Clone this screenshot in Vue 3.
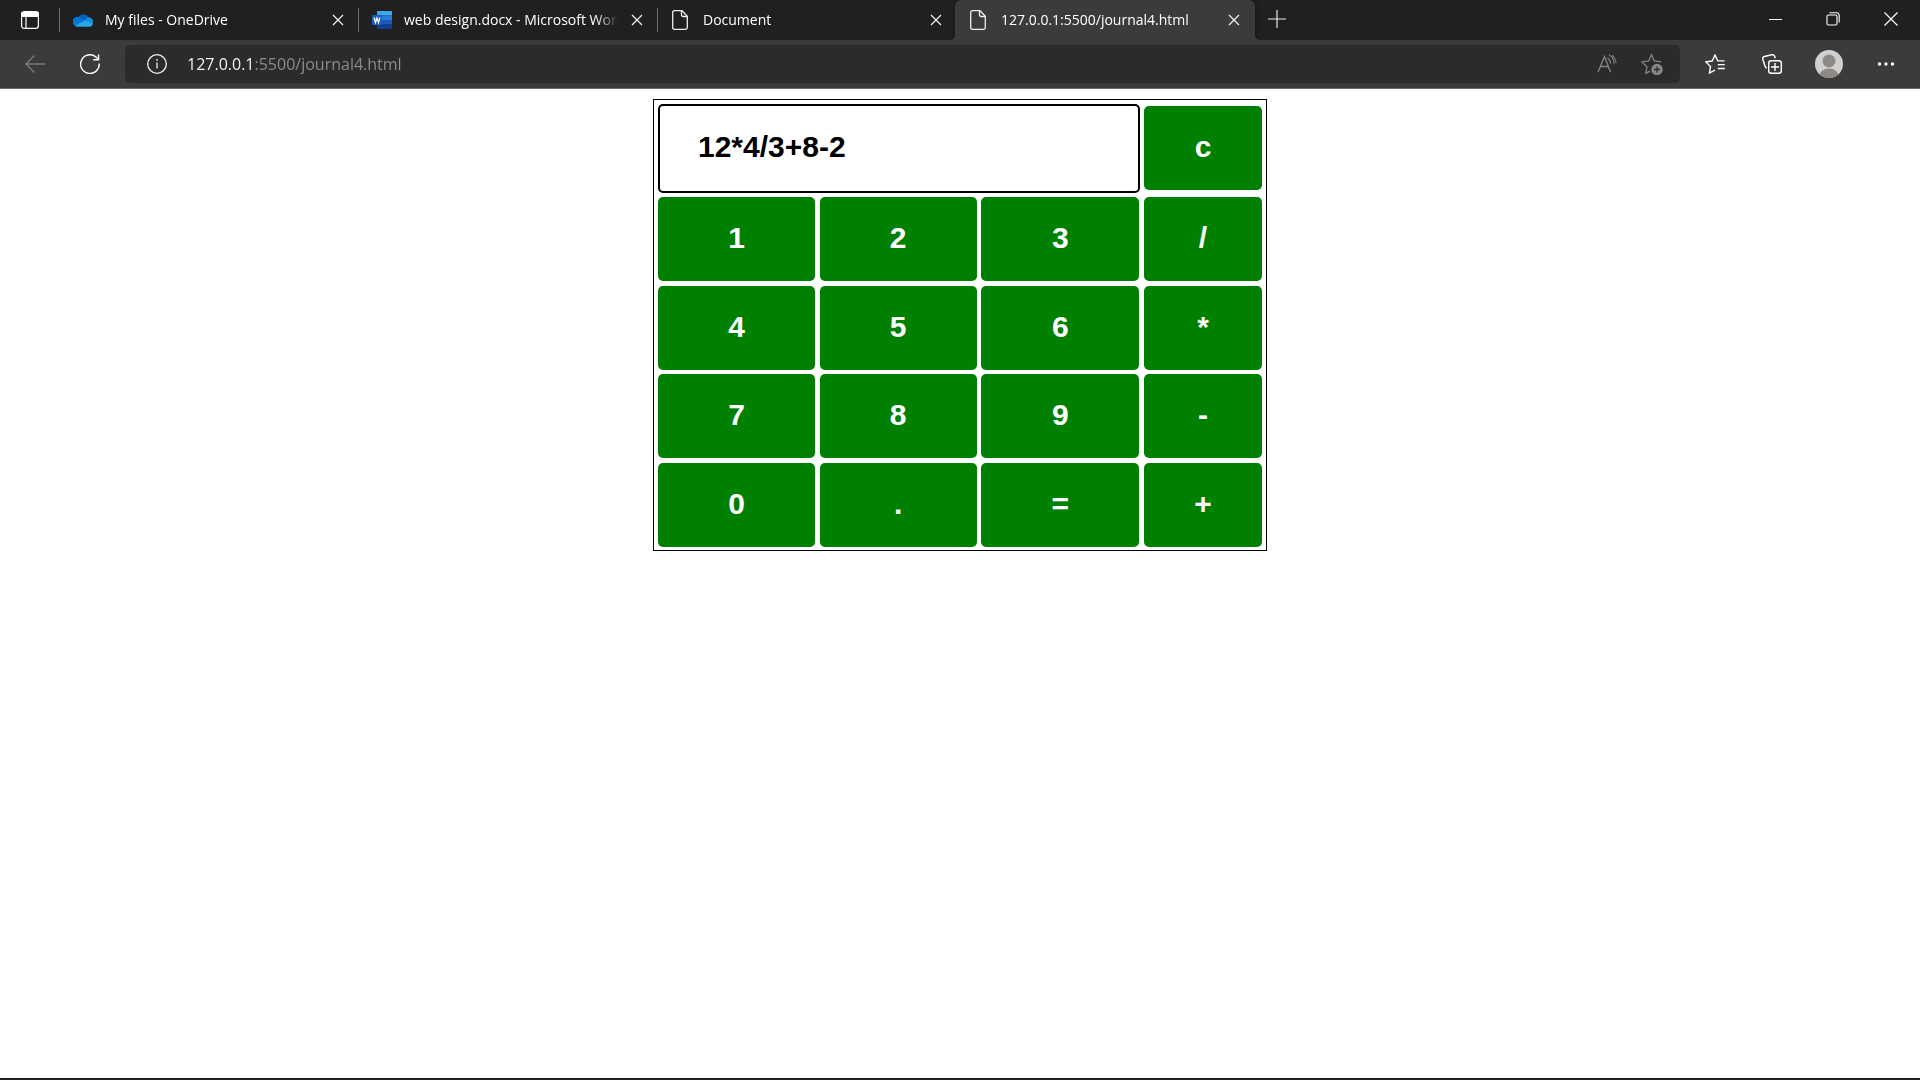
<script setup>
import { ref } from 'vue'

const tabs = [
  { id: 1, title: 'My files - OneDrive', icon: 'onedrive' },
  { id: 2, title: 'web design.docx - Microsoft Word', icon: 'word' },
  { id: 3, title: 'Document', icon: 'file' },
  { id: 4, title: '127.0.0.1:5500/journal4.html', icon: 'file' },
]
const activeTab = ref(4)
const address = ref('127.0.0.1:5500/journal4.html')

const keys = ['1', '2', '3', '/', '4', '5', '6', '*', '7', '8', '9', '-', '0', '.', '=', '+']
const expression = ref('12*4/3+8-2')

function compute(source) {
  const tokens = source.match(/\d*\.?\d+|[-+*/]/g) || []
  const terms = []
  let sign = '+'
  for (const token of tokens) {
    if (/^[-+*/]$/.test(token)) {
      sign = token
      continue
    }
    const value = Number(token)
    if (sign === '*') terms.push(terms.pop() * value)
    else if (sign === '/') terms.push(terms.pop() / value)
    else terms.push(sign === '-' ? -value : value)
  }
  return String(terms.reduce((sum, term) => sum + term, 0))
}

function press(key) {
  expression.value = key === '=' ? compute(expression.value) : expression.value + key
}
</script>

<template>
  <div class="browser">
    <header>
      <div class="titlebar">
        <button class="tab-actions" aria-label="Tab actions">
          <svg width="20" height="20" viewBox="0 0 20 20" fill="none" stroke="#fff" stroke-width="1.2">
            <rect x="1.600" y="1.600" width="16.800" height="16.800" rx="2.600" />
            <path d="M2 2.500h16v3.800H2z" fill="#fff" />
            <path d="M6 6v12.400" />
          </svg>
        </button>
        <nav class="tabs" aria-label="Tabs">
          <div v-for="tab in tabs" :key="tab.id" class="tab" :class="{ active: tab.id === activeTab }">
            <svg v-if="tab.icon === 'onedrive'" class="tab-icon" viewBox="0 0 20 20">
              <path d="M4.800 9A5.900 5.900 0 0 1 15.600 7.200L12 12 5 9.300z" fill="#0364b8" />
              <path d="M1 15A4.500 4.500 0 0 1 7.600 8L13 11.400 3 16.400A4 4 0 0 1 1 15z" fill="#0078d4" />
              <path d="M15.600 7.200a4.600 4.600 0 0 1 4.200 6L12.200 11c.8-2 1.600-3.300 3.400-3.800z" fill="#1490df" />
              <path d="M2.200 15.700 11.800 10.400 19.700 13A3.400 3.400 0 0 1 16.300 16.800H4.600a4 4 0 0 1-2.400-1.100z" fill="#28a8ea" />
            </svg>
            <svg v-else-if="tab.icon === 'word'" class="tab-icon" viewBox="0 0 20 20">
              <path d="M6 1h13a1 1 0 0 1 1 1v3.500H5V2a1 1 0 0 1 1-1z" fill="#41a5ee" />
              <path d="M5 5.500h15V10H5z" fill="#2b7cd3" />
              <path d="M5 10h15v4.500H5z" fill="#185abd" />
              <path d="M5 14.500h15V18a1 1 0 0 1-1 1H6a1 1 0 0 1-1-1z" fill="#103f91" />
              <rect y="5" width="10" height="10" rx="1" fill="#185abd" />
              <path d="M2 7.500 3.500 12.500 5 8 6.500 12.500 8 7.500" fill="none" stroke="#fff" stroke-width="1.300" />
            </svg>
            <svg v-else class="tab-icon" viewBox="0 0 20 20" fill="none" stroke="#eee" stroke-width="1.300">
              <path d="M3.700.7H11L16.300 6.200V17.500a1.800 1.800 0 0 1-1.800 1.800h-11a1.800 1.800 0 0 1-1.800-1.800V2.500A1.800 1.800 0 0 1 3.500.7z" />
              <path d="M10.500.8V5a1.500 1.500 0 0 0 1.500 1.500h4.200" />
            </svg>
            <button class="tab-title" @click="activeTab = tab.id">{{ tab.title }}</button>
            <button class="tab-close" aria-label="Close tab">
              <svg width="12" height="12" viewBox="0 0 12 12" stroke="#eee" stroke-width="1.300">
                <path d="M1 1l10 10M11 1L1 11" />
              </svg>
            </button>
          </div>
        </nav>
        <button class="new-tab" aria-label="New tab">
          <svg width="18" height="18" viewBox="0 0 18 18" stroke="#e8e8e8" stroke-width="1.200">
            <path d="M9 0v18M0 9h18" />
          </svg>
        </button>
        <div class="window-buttons">
          <button aria-label="Minimize">
            <svg width="14" height="14" viewBox="0 0 14 14"><path d="M1 7h13v1H1z" fill="#fff" /></svg>
          </button>
          <button aria-label="Restore">
            <svg width="14" height="14" viewBox="0 0 14 14" fill="none" stroke="#fff" stroke-width="1.100">
              <rect x="1" y="3" width="10" height="10" rx="1.500" />
              <path d="M3.500.8h7.200a2.500 2.500 0 0 1 2.500 2.500v7.200" />
            </svg>
          </button>
          <button aria-label="Close">
            <svg width="14" height="14" viewBox="0 0 14 14" stroke="#fff" stroke-width="1.200">
              <path d="M.5.5l13 13M13.500.5l-13 13" />
            </svg>
          </button>
        </div>
      </div>

      <div class="toolbar">
        <div class="nav-buttons">
          <button aria-label="Back" disabled>
            <svg width="20" height="20" viewBox="0 0 20 20" fill="none" stroke="#7c7c7c" stroke-width="1.300">
              <path d="M20 10H1M9.500 1.500 1 10l8.500 8.500" />
            </svg>
          </button>
          <button aria-label="Refresh">
            <svg width="20" height="20" viewBox="0 0 20 20" fill="none" stroke="#fff" stroke-width="1.400">
              <path d="M19.200 9.500a9.300 9.300 0 1 1-3.200-6.400L18.500 5.500" />
              <path d="M18.600.5v5.200h-5.400" />
            </svg>
          </button>
        </div>
        <div class="address-bar">
          <button class="info" aria-label="View site information">
            <svg width="20" height="20" viewBox="0 0 20 20" fill="none" stroke="#f0f0f0" stroke-width="1.300">
              <circle cx="10" cy="10" r="9.300" />
              <path d="M10 8.500v6" />
              <circle cx="10" cy="5.900" r=".6" fill="#f0f0f0" stroke-width=".6" />
            </svg>
          </button>
          <input v-model="address" class="address" type="text" aria-label="Address" spellcheck="false" />
          <button class="address-action" aria-label="Read aloud">
            <svg width="20" height="20" viewBox="0 0 20 20" fill="none" stroke="#868686" stroke-width="1.300">
              <path d="M1 18 7.500 2.500 13.500 18M3.200 12.500h8.300" />
              <path d="M10.500 3.700q2.600 1.800 3.300 6M12 .8q4.500 2.200 5.200 8.900M15.200 1.200q3.300 3 4 7.800" stroke-width="1.100" />
            </svg>
          </button>
          <button class="address-action" aria-label="Add this page to favorites">
            <svg width="22" height="22" viewBox="0 0 22 22" fill="none" stroke="#868686" stroke-width="1.300">
              <path d="M9 18.200 4.800 20.400 5.900 13.800.9 8.900 7.700 7.900 10.500 1.700 13.400 7.900 20.200 8.800" />
              <circle cx="16" cy="16.500" r="5.700" fill="#868686" stroke="none" />
              <path d="M16 13.500v6M13 16.500h6" stroke="#2b2b2b" />
            </svg>
          </button>
        </div>
        <div class="menu-buttons">
          <button aria-label="Favorites">
            <svg width="20" height="20" viewBox="0 0 20 20" fill="none" stroke="#fff" stroke-width="1.400">
              <path d="M10 16.200 4.500 19 5.500 12.400.8 7.900 7.200 7 10 1 12.700 6.900H19.500" />
              <path d="M12.800 10.600h7M12.800 14.500h7" />
            </svg>
          </button>
          <button aria-label="Collections">
            <svg width="20" height="20" viewBox="0 0 20 20" fill="none" stroke="#fff" stroke-width="1.400">
              <rect x="6.700" y="6.700" width="12.600" height="12.600" rx="2.500" />
              <path d="M13 9v8M9 13h8" />
              <path d="M4.800 14.200a2.500 2.500 0 0 1-1.700-1.900L.8 5.300A2.300 2.300 0 0 1 2.400 2.500L9.800.8A2.500 2.500 0 0 1 12.700 2.500L13.300 4.300" />
            </svg>
          </button>
          <button aria-label="Profile">
            <svg width="28" height="28" viewBox="0 0 28 28">
              <defs>
                <clipPath id="avatar"><circle cx="14" cy="14" r="14" /></clipPath>
              </defs>
              <g clip-path="url(#avatar)">
                <path d="M0 0h28v28H0z" fill="#d2d0ce" />
                <circle cx="14" cy="11" r="6.500" fill="#8e8986" />
                <ellipse cx="14" cy="27" rx="10" ry="8.500" fill="#8e8986" />
              </g>
            </svg>
          </button>
          <button aria-label="Settings and more">
            <svg width="18" height="4" viewBox="0 0 18 4" fill="#fff">
              <circle cx="2.500" cy="2" r="1.700" />
              <circle cx="9" cy="2" r="1.700" />
              <circle cx="15.500" cy="2" r="1.700" />
            </svg>
          </button>
        </div>
      </div>
    </header>

    <main>
      <section class="calculator" aria-label="Calculator">
        <div class="top-row">
          <input v-model="expression" class="display" type="text" aria-label="Expression" />
          <button class="key clear" @click="expression = ''">c</button>
        </div>
        <div class="keypad">
          <button v-for="key in keys" :key="key" class="key" @click="press(key)">{{ key }}</button>
        </div>
      </section>
    </main>
  </div>
</template>

<style>
body {
  margin: 0;
}
</style>

<style scoped>
.browser {
  display: flex;
  flex-direction: column;
  min-height: 100vh;
  box-sizing: border-box;
  border-bottom: 2px solid #221f22;
  background: #fff;
  font-family: "Open Sans", "Noto Sans", sans-serif;
}

button,
input {
  box-sizing: border-box;
  margin: 0;
  padding: 0;
  border: 0;
  background: none;
  font: inherit;
}

svg {
  display: block;
  flex: none;
}

header button {
  display: flex;
  align-items: center;
  justify-content: center;
  flex: none;
}

.titlebar {
  display: flex;
  height: 40px;
  background: #202020;
}

.tab-actions {
  width: 59px;
}

.tabs {
  display: flex;
  min-width: 0;
}

.tab {
  position: relative;
  display: flex;
  align-items: center;
  box-sizing: border-box;
  width: 299px;
  min-width: 0;
  padding: 0 14px;
  color: #fff;
}

.tab::before {
  content: "";
  position: absolute;
  left: 0;
  top: 8px;
  width: 1px;
  height: 24px;
  background: #6a6a6a;
}

.tab.active {
  width: 300px;
  margin-left: -1px;
  padding-right: 15px;
  border-radius: 6px 6px 0 0;
  background: #3b3b3b;
  box-shadow: 0 0 4px #111;
  clip-path: inset(0 -6px);
}

.tab.active::before,
.tab.active::after {
  content: "";
  position: absolute;
  top: auto;
  bottom: 0;
  width: 5px;
  height: 5px;
}

.tab.active::before {
  left: -5px;
  background: radial-gradient(circle at 0 0, transparent 5px, #3b3b3b 5px);
}

.tab.active::after {
  right: -5px;
  background: radial-gradient(circle at 100% 0, transparent 5px, #3b3b3b 5px);
}

.tab-icon {
  width: 20px;
  height: 20px;
}

header .tab-title {
  display: block;
  flex: 1;
  min-width: 0;
  height: 38px;
  margin-left: 12px;
  margin-right: 12px;
  overflow: hidden;
  color: #fff;
  font-size: 14px;
  line-height: 38px;
  text-align: left;
  white-space: nowrap;
  mask-image: linear-gradient(to right, #000 calc(100% - 24px), transparent);
}

.tab-close {
  width: 12px;
  height: 20px;
}

.new-tab {
  width: 44px;
  height: 38px;
}

.window-buttons {
  display: flex;
  height: 38px;
  margin-left: auto;
}

.window-buttons button {
  width: 58px;
}

.toolbar {
  display: flex;
  align-items: center;
  box-sizing: border-box;
  height: 49px;
  padding: 0 6px 1px 11px;
  border-bottom: 1px solid #6b6b6b;
  background: #3b3b3b;
}

.nav-buttons {
  display: flex;
  gap: 7px;
}

.nav-buttons button {
  width: 48px;
  height: 38px;
}

.address-bar {
  display: flex;
  align-items: center;
  flex: 1;
  min-width: 0;
  height: 38px;
  margin: 1px 6px 0 11px;
  padding-right: 6px;
  border-radius: 5px;
  background: #2b2b2b;
}

.info {
  width: 60px;
  height: 38px;
  margin-left: 2px;
}

.address {
  flex: 1;
  min-width: 0;
  height: 38px;
  background: linear-gradient(to right, #fff 67px, #8e8e8e 67px);
  background-clip: text;
  color: transparent;
  caret-color: #fff;
  font-size: 16px;
}

.address-action {
  width: 45px;
  height: 38px;
}

.menu-buttons {
  display: flex;
}

.menu-buttons button {
  width: 57px;
  height: 38px;
}

main {
  display: flex;
  flex: 1;
  align-items: flex-start;
  justify-content: center;
  padding-top: 10px;
}

.calculator {
  display: flex;
  flex-direction: column;
  gap: 4px;
  padding: 4px 4px 3px;
  border: 1px solid #000;
  font-family: "Liberation Sans", Arial, sans-serif;
  font-size: 30px;
  font-weight: bold;
}

.top-row {
  display: flex;
  gap: 4px;
}

.display {
  width: 482px;
  height: 89px;
  padding: 0 38px 4px;
  border: 2px solid #000;
  border-radius: 5px;
  background: #fff;
  color: #000;
}

.keypad {
  display: grid;
  grid-template-columns: 157px 157px 158px 118px;
  justify-content: space-between;
  align-content: space-between;
  height: 350px;
}

.key {
  height: 84px;
  padding-bottom: 2px;
  border-radius: 5px;
  background: #008000;
  color: #fff;
}

.clear {
  width: 118px;
  margin-top: 2px;
}
</style>
